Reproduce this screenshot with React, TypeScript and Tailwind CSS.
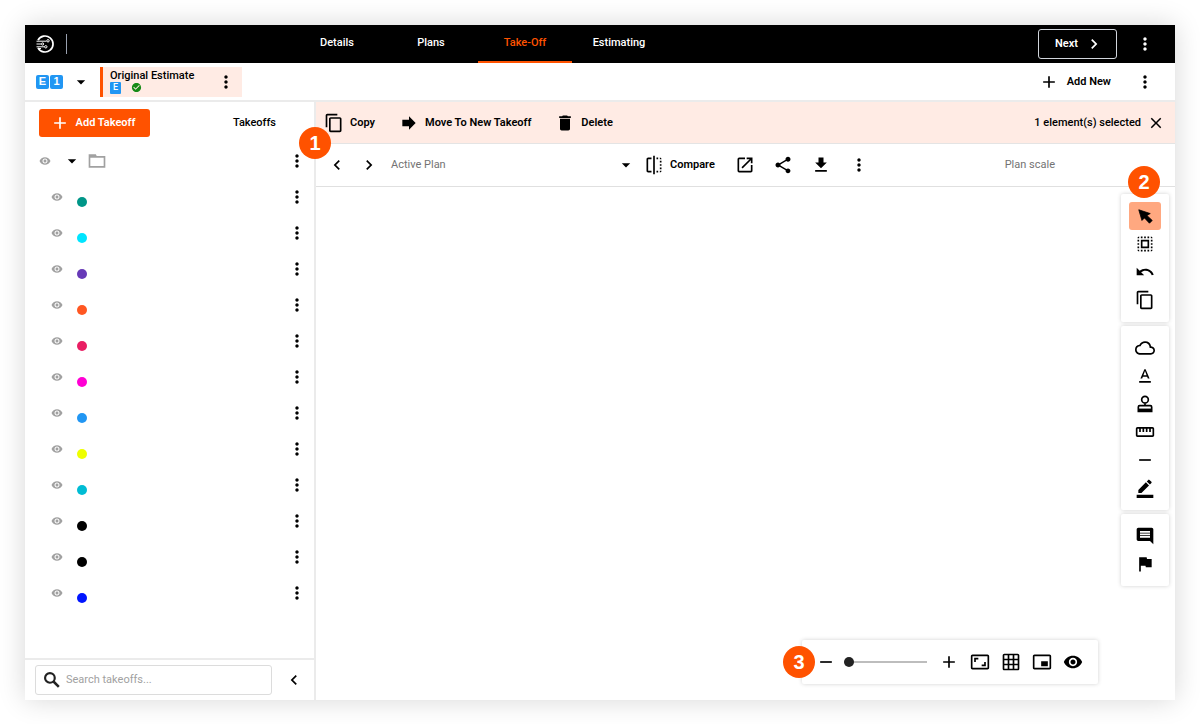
import type { ReactNode } from "react";
import {
  MdAdd,
  MdArrowDropDown,
  MdAspectRatio,
  MdBorderColor,
  MdCheckCircle,
  MdChevronLeft,
  MdChevronRight,
  MdClose,
  MdCloudQueue,
  MdComment,
  MdContentCopy,
  MdDelete,
  MdFlag,
  MdFlip,
  MdForward,
  MdGetApp,
  MdGridOn,
  MdMoreVert,
  MdOpenInNew,
  MdPictureInPictureAlt,
  MdRemove,
  MdSelectAll,
  MdShare,
  MdStraighten,
  MdUndo,
  MdVisibility,
} from "react-icons/md";

const tabs = ["Details", "Plans", "Take-Off", "Estimating"];

const takeoffs = [
  "#009688",
  "#00e5ff",
  "#673ab7",
  "#ff5722",
  "#e91e63",
  "#ff00d4",
  "#2196f3",
  "#eeff00",
  "#00bcd4",
  "#000000",
  "#000000",
  "#0015ff",
];

const Logo = () => (
  <svg viewBox="0 0 18 18" className="size-[18px]" fill="none" stroke="white">
    <path d="M2 5.2a8 8 0 1 1 0 7.6" strokeWidth="1.7" />
    <path d="M.5 6.2h10M.5 9h4.7M.5 11.8h8" strokeWidth="1" />
    <path d="M2 13.5h3" strokeWidth="1" />
    <circle cx="12" cy="5.8" r="1.2" />
    <circle cx="6.6" cy="9" r="1.1" />
    <circle cx="9.8" cy="11.8" r="1.2" />
  </svg>
);

const SearchIcon = () => (
  <svg viewBox="0 0 24 24" className="size-5 shrink-0 text-[#222]" fill="none" stroke="currentColor" strokeWidth="2.6">
    <circle cx="9.5" cy="9.5" r="5.8" />
    <path d="M13.8 13.8l6.4 6.4" strokeWidth="3" />
  </svg>
);

const CursorIcon = () => (
  <svg viewBox="0 0 24 24" className="size-[19px]" fill="currentColor" stroke="currentColor" strokeLinejoin="round">
    <path d="M3.500 3.500l4 13.500 3.200-3.200 6.300 6.700 3.500-3.500-6.700-6.300 4.200-2.400z" />
  </svg>
);

const TextIcon = () => (
  <svg viewBox="0 0 24 24" className="size-5" fill="currentColor">
    <path d="M5 18h14v2H5zM9.5 12.8h5l.9 2.200h2.100L12.750 4h-1.500L6.500 15h2.100zM12 5.980L13.870 11h-3.740z" />
  </svg>
);

const StampIcon = () => (
  <svg viewBox="0 0 24 24" className="size-5" fill="none" stroke="currentColor" strokeWidth="2">
    <path d="M12 14v-3" />
    <circle cx="12" cy="6.800" r="4" />
    <path d="M4 21v-5.500a1.500 1.500 0 0 1 1.500-1.500h13a1.500 1.500 0 0 1 1.500 1.500V21z" />
    <path d="M4 19.500h16" strokeWidth="4" />
  </svg>
);

type IconButtonProps = {
  label: string;
  className?: string;
  children: ReactNode;
};

const IconButton = ({ label, className = "", children }: IconButtonProps) => (
  <button
    type="button"
    aria-label={label}
    className={`flex shrink-0 items-center justify-center ${className}`}
  >
    {children}
  </button>
);

const Marker = ({ className, children }: { className: string; children: ReactNode }) => (
  <span
    className={`absolute z-10 flex size-8 items-center justify-center rounded-full bg-[#ff5200] font-['Liberation_Sans',sans-serif] text-[20px] font-bold text-white ${className}`}
  >
    {children}
  </span>
);

const Header = () => (
  <header className="flex h-[38px] items-stretch bg-black pr-5 text-white">
    <div className="flex w-[265px] shrink-0 items-center gap-3 pl-[11px]">
      <Logo />
      <span className="h-5 w-px bg-gray-400" />
    </div>
    <nav className="flex flex-1">
      {tabs.map((tab) => (
        <a
          key={tab}
          href="#"
          className={`flex w-[94px] items-center justify-center border-b-2 ${
            tab === "Take-Off" ? "border-[#ff5200] text-[#ff5200]" : "border-transparent"
          }`}
        >
          {tab}
        </a>
      ))}
    </nav>
    <div className="flex items-center gap-[18px]">
      <button
        type="button"
        className="flex h-[30px] w-[79px] items-center justify-center gap-1.5 rounded-[3px] border border-gray-300 pl-1 font-semibold"
      >
        Next
        <MdChevronRight size={20} />
      </button>
      <IconButton label="Menu">
        <MdMoreVert size={20} />
      </IconButton>
    </div>
  </header>
);

const EstimateBar = () => (
  <div className="flex h-[39px] items-center border-b-2 border-[#ebebeb] pr-5">
    <div className="flex gap-px pl-[11px] font-['Liberation_Sans',sans-serif] leading-none font-bold text-white">
      <span className="flex h-[14px] w-[13px] items-center justify-center rounded-xs bg-[#2196f3]">E</span>
      <span className="flex h-[14px] w-[13px] items-center justify-center rounded-xs bg-[#2196f3]">1</span>
    </div>
    <IconButton label="Choose estimate" className="ml-2">
      <MdArrowDropDown size={20} />
    </IconButton>
    <div className="ml-[9px] flex h-[30px] w-[142px] items-center border-l-[3px] border-[#ff5200] bg-[#ffebe4] pl-[7px]">
      <div className="flex-1">
        <div className="leading-3 whitespace-nowrap">Original Estimate</div>
        <div className="flex items-center gap-2.5">
          <span className="flex h-3 w-[11px] items-center justify-center rounded-[1px] bg-[#2196f3] text-[9px] leading-none text-white">
            E
          </span>
          <MdCheckCircle size={11} className="text-[#168a16]" />
        </div>
      </div>
      <IconButton label="Estimate options" className="mr-1.5">
        <MdMoreVert size={20} />
      </IconButton>
    </div>
    <button type="button" className="ml-auto flex items-center gap-2 font-semibold">
      <MdAdd size={20} />
      Add New
    </button>
    <IconButton label="More" className="ml-6">
      <MdMoreVert size={20} />
    </IconButton>
  </div>
);

const Sidebar = () => (
  <aside className="flex w-[291px] shrink-0 flex-col border-r-2 border-[#ebebeb]">
    <div className="flex h-[41px] items-center justify-between pr-[38px] pl-3.5">
      <button
        type="button"
        className="flex h-7 w-[111px] items-center justify-center gap-1.5 rounded-[3px] bg-[#ff5200] pr-1 font-semibold text-white"
      >
        <MdAdd size={20} />
        Add Takeoff
      </button>
      <span>Takeoffs</span>
    </div>

    <div className="flex h-9 items-center pr-[7px] pl-3.5">
      <MdVisibility size={12} className="text-neutral-400" />
      <IconButton label="Collapse folder" className="ml-[11px]">
        <MdArrowDropDown size={20} />
      </IconButton>
      <svg viewBox="0 0 24 24" className="ml-[5px] size-5 text-neutral-400" fill="none" stroke="currentColor" strokeWidth="2">
        <path d="M3 7V5h7l1 2h10v12H3zM3 7h9" />
      </svg>
      <IconButton label="Folder options" className="ml-auto">
        <MdMoreVert size={20} />
      </IconButton>
    </div>
    <ul className="flex-1">
      {takeoffs.map((color, i) => (
        <li key={i} className="flex h-9 items-center pr-[7px] pl-[26px]">
          <MdVisibility size={12} className="text-neutral-400" />
          <span className="mt-2.5 ml-3.5 size-2.5 rounded-full" style={{ backgroundColor: color }} />
          <IconButton label="Takeoff options" className="ml-auto">
            <MdMoreVert size={20} />
          </IconButton>
        </li>
      ))}
    </ul>

    <div className="flex h-[42px] items-center border-t-2 border-[#ebebeb] px-2.5">
      <label className="flex h-[30px] w-[237px] items-center gap-1 rounded-[3px] border border-[#dcdcdc] pl-1.5">
        <SearchIcon />
        <input
          type="text"
          aria-label="Search takeoffs"
          placeholder="Search takeoffs..."
          className="w-full font-normal outline-none placeholder:text-neutral-400"
        />
      </label>
      <IconButton label="Collapse panel" className="ml-3">
        <MdChevronLeft size={20} />
      </IconButton>
    </div>
  </aside>
);

const SelectionBar = () => (
  <div className="flex h-[42px] items-center gap-6 border-b border-[#e4e4e4] bg-[#ffebe4] pr-2.5 pl-2">
    <button type="button" className="flex items-center gap-1.5 font-semibold">
      <MdContentCopy size={20} />
      Copy
    </button>
    <button type="button" className="flex items-center gap-1.5 font-semibold">
      <MdForward size={20} />
      Move To New Takeoff
    </button>
    <button type="button" className="flex items-center gap-1.5 font-semibold">
      <MdDelete size={20} />
      Delete
    </button>
    <div className="ml-auto flex items-center gap-1.5">
      <span>1 element(s) selected</span>
      <IconButton label="Clear selection">
        <MdClose size={18} />
      </IconButton>
    </div>
  </div>
);

const PlanBar = () => (
  <div className="flex h-[43px] items-center border-b border-[#e0e0e0] pl-[11px]">
    <IconButton label="Previous plan">
      <MdChevronLeft size={20} />
    </IconButton>
    <IconButton label="Next plan" className="ml-3">
      <MdChevronRight size={20} />
    </IconButton>
    <button
      type="button"
      className="ml-3 flex w-[245px] items-center justify-between font-normal text-neutral-500"
    >
      Active Plan
      <MdArrowDropDown size={20} className="text-black" />
    </button>
    <button type="button" className="ml-2 flex items-center gap-1.5 font-semibold">
      <MdFlip size={20} />
      Compare
    </button>
    <div className="ml-5 flex items-center gap-[18px]">
      <IconButton label="Open in new window">
        <MdOpenInNew size={20} />
      </IconButton>
      <IconButton label="Share">
        <MdShare size={20} />
      </IconButton>
      <IconButton label="Download">
        <MdGetApp size={20} />
      </IconButton>
      <IconButton label="Plan options">
        <MdMoreVert size={20} />
      </IconButton>
    </div>
    <span className="mr-[120px] ml-auto font-normal text-neutral-500">Plan scale</span>
  </div>
);

const ToolGroup = ({ children }: { children: ReactNode }) => (
  <div className="flex w-12 flex-col items-center rounded-xs bg-white py-2 shadow-[0_0_4px_rgba(0,0,0,0.18)]">
    {children}
  </div>
);

const Tools = () => (
  <div className="absolute top-[7px] right-1.5 flex flex-col gap-1">
    <Marker className="top-[-28px] left-[7px]">2</Marker>
    <ToolGroup>
      <IconButton label="Select" className="h-7 w-8 rounded-[3px] bg-[#ffa880]">
        <CursorIcon />
      </IconButton>
      <IconButton label="Select area" className="h-7 w-8">
        <MdSelectAll size={20} />
      </IconButton>
      <IconButton label="Undo" className="h-7 w-8">
        <MdUndo size={20} />
      </IconButton>
      <IconButton label="Copy" className="h-7 w-8">
        <MdContentCopy size={20} />
      </IconButton>
    </ToolGroup>
    <ToolGroup>
      <IconButton label="Cloud" className="h-7 w-8">
        <MdCloudQueue size={20} />
      </IconButton>
      <IconButton label="Text" className="h-7 w-8">
        <TextIcon />
      </IconButton>
      <IconButton label="Stamp" className="h-7 w-8">
        <StampIcon />
      </IconButton>
      <IconButton label="Measure" className="h-7 w-8">
        <MdStraighten size={20} />
      </IconButton>
      <IconButton label="Line" className="h-7 w-8">
        <MdRemove size={20} />
      </IconButton>
      <IconButton label="Pen" className="h-7 w-8">
        <MdBorderColor size={20} />
      </IconButton>
    </ToolGroup>
    <ToolGroup>
      <IconButton label="Comment" className="h-7 w-8">
        <MdComment size={20} />
      </IconButton>
      <IconButton label="Flag" className="h-7 w-8">
        <MdFlag size={20} />
      </IconButton>
    </ToolGroup>
  </div>
);

const ZoomBar = () => (
  <div className="absolute right-[77px] bottom-4 flex h-11 w-[296px] items-center rounded-xs bg-white pl-3.5 shadow-[0_0_4px_rgba(0,0,0,0.18)]">
    <Marker className="left-[-19px]">3</Marker>
    <IconButton label="Zoom out">
      <MdRemove size={20} />
    </IconButton>
    <input
      type="range"
      aria-label="Zoom"
      min={0}
      max={100}
      defaultValue={0}
      className="ml-2 h-5 w-[83px] appearance-none bg-transparent [&::-webkit-slider-runnable-track]:h-[2px] [&::-webkit-slider-runnable-track]:bg-[#bdbdbd] [&::-webkit-slider-thumb]:-mt-1 [&::-webkit-slider-thumb]:size-2.5 [&::-webkit-slider-thumb]:appearance-none [&::-webkit-slider-thumb]:rounded-full [&::-webkit-slider-thumb]:bg-[#222]"
    />
    <div className="ml-3 flex items-center gap-[11px]">
      <IconButton label="Zoom in">
        <MdAdd size={20} />
      </IconButton>
      <IconButton label="Fit to screen">
        <MdAspectRatio size={20} />
      </IconButton>
      <IconButton label="Grid">
        <MdGridOn size={20} />
      </IconButton>
      <IconButton label="Mini map">
        <MdPictureInPictureAlt size={20} />
      </IconButton>
      <IconButton label="Visibility">
        <MdVisibility size={20} />
      </IconButton>
    </div>
  </div>
);

const App = () => {
  return (
    <div className="flex min-h-screen bg-white px-[25px] pt-[25px] pb-6 font-[Roboto,sans-serif] text-[11px] leading-4 font-medium text-black">
      <div className="flex min-w-0 flex-1 flex-col bg-white shadow-[0_0_26px_rgba(0,0,0,0.16)]">
        <Header />
        <EstimateBar />
        <div className="flex flex-1">
          <Sidebar />
          <main className="relative flex min-w-0 flex-1 flex-col">
            <Marker className="top-[25px] left-[-17px]">1</Marker>
            <SelectionBar />
            <PlanBar />
            <div className="relative flex-1">
              <Tools />
              <ZoomBar />
            </div>
          </main>
        </div>
      </div>
    </div>
  );
};
export default App;
